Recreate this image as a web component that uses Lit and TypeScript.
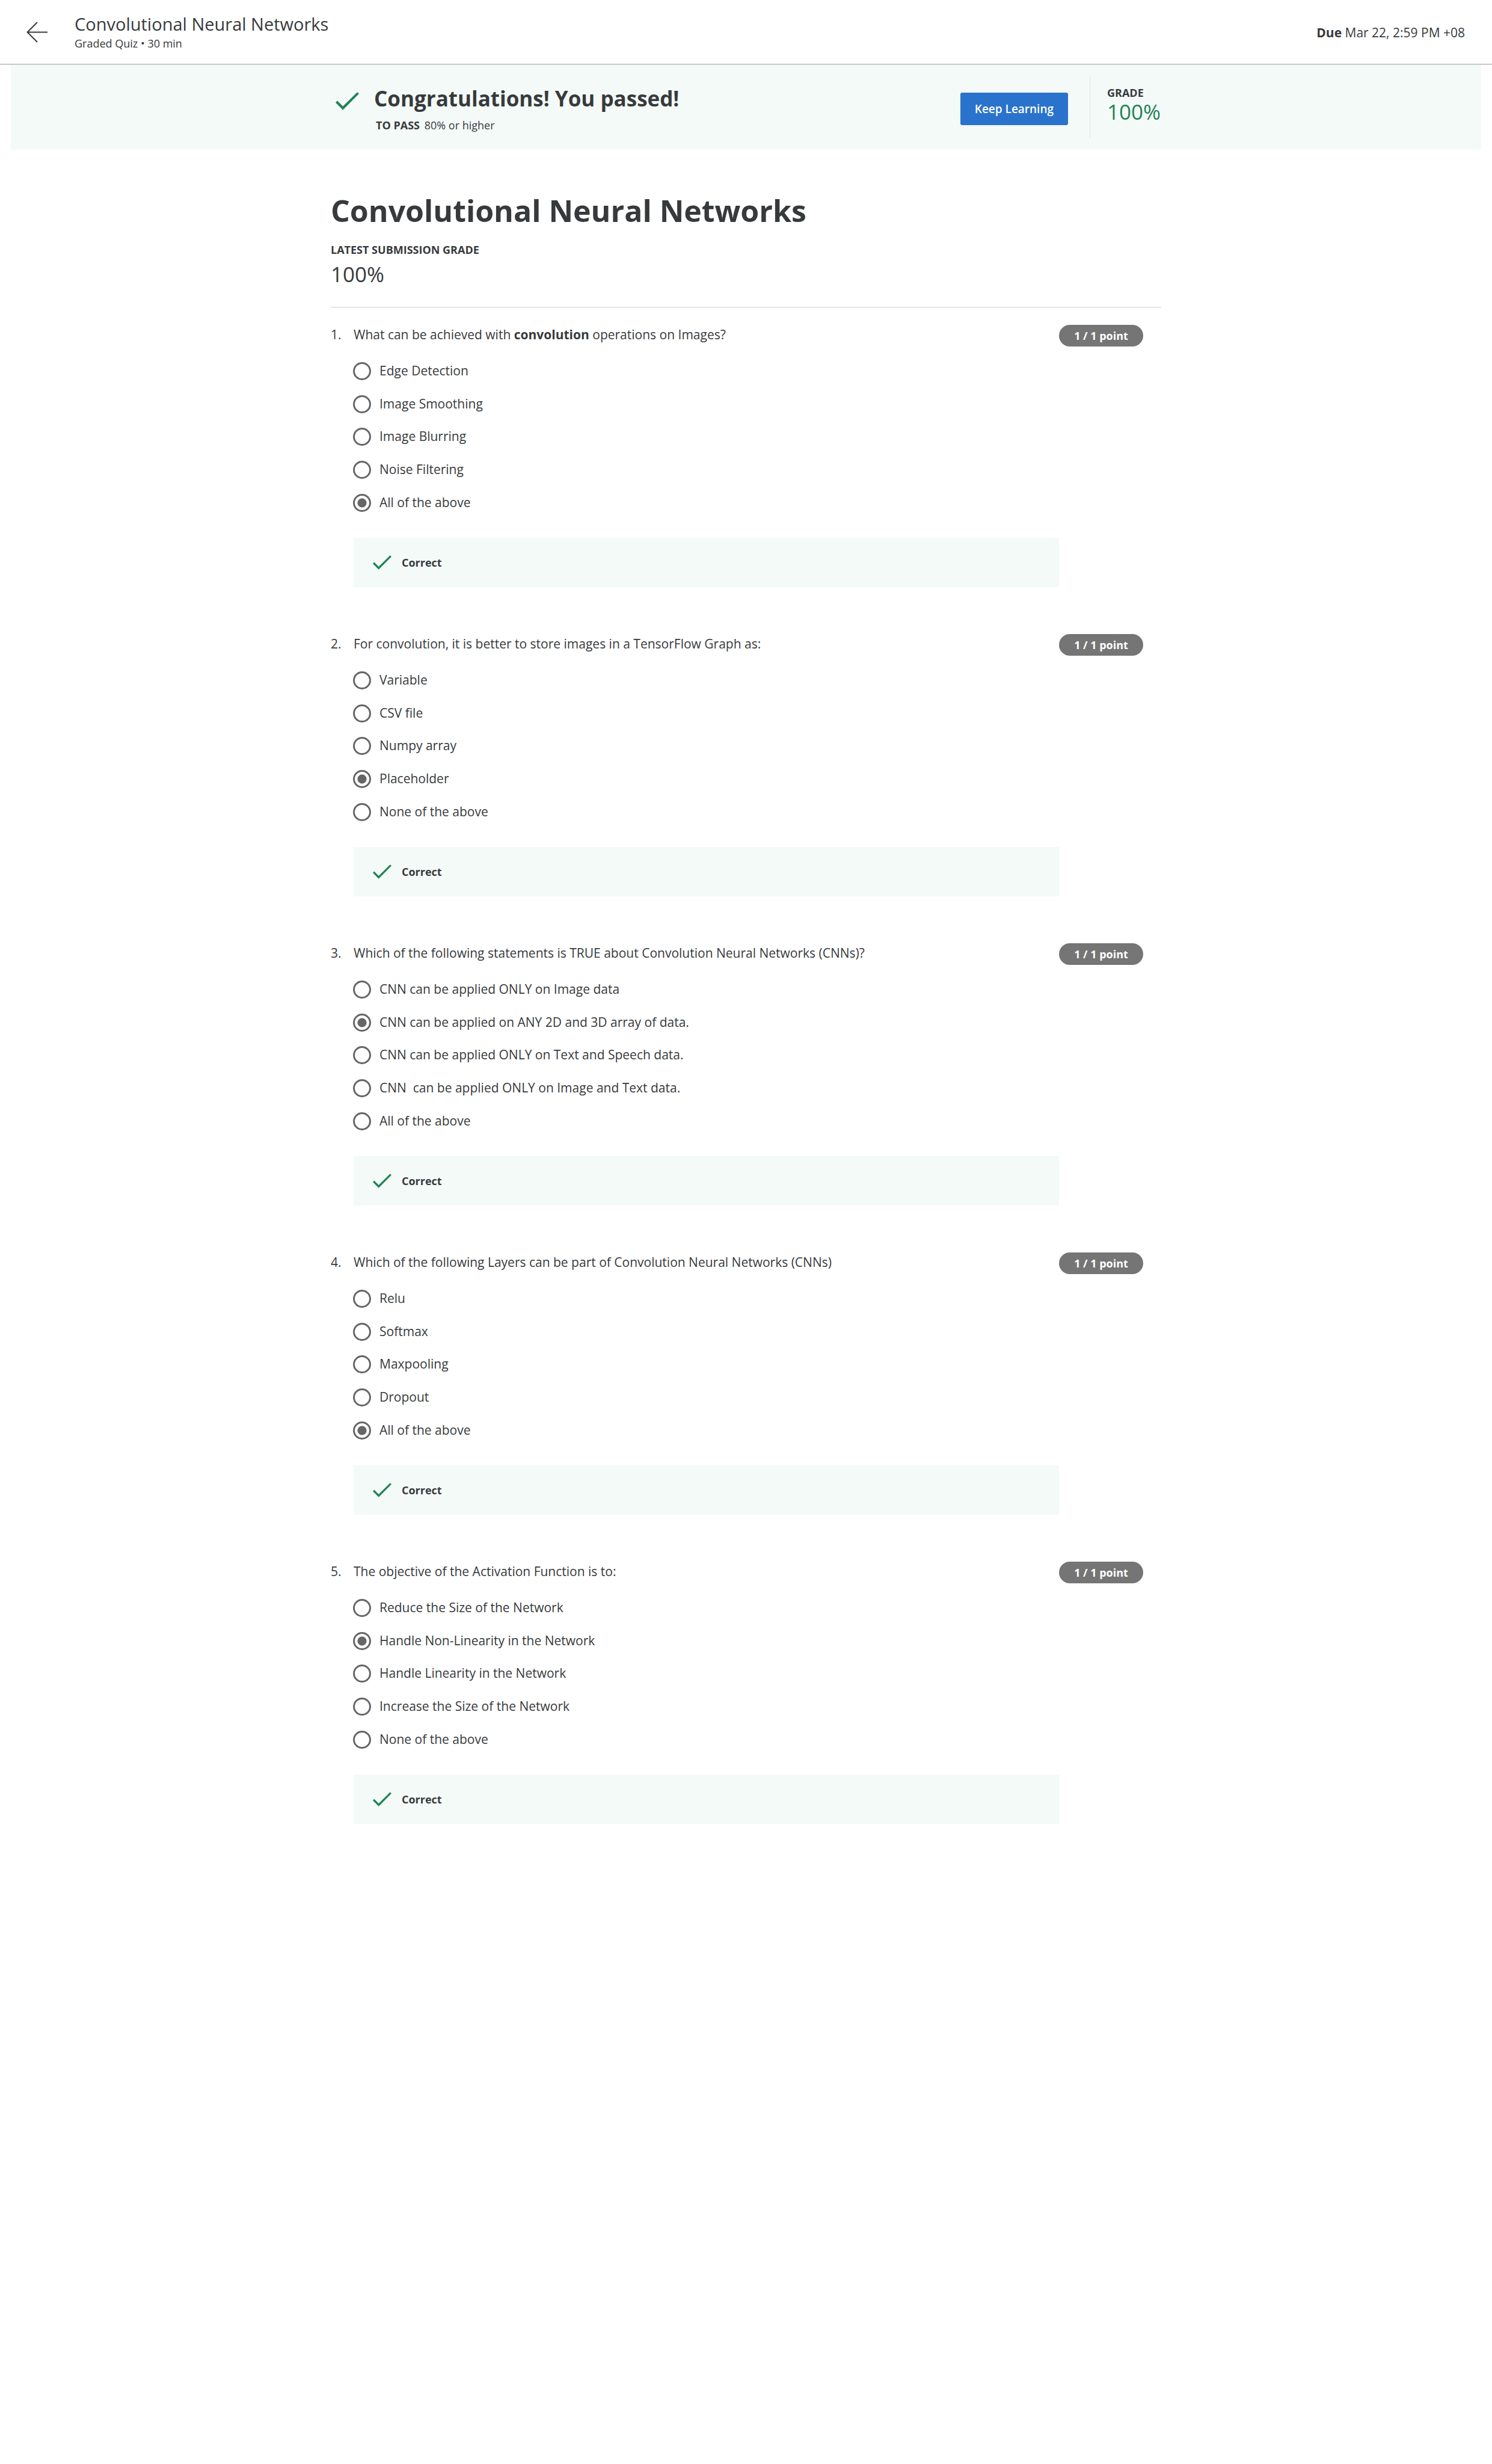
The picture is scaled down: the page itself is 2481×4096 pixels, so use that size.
import { LitElement, html, css, svg } from "lit";
import type { TemplateResult } from "lit";
import { customElement, property } from "lit/decorators.js";

interface Question {
  prompt: TemplateResult | string;
  options: string[];
  answer: number;
}

const QUESTIONS: Question[] = [
  {
    prompt: html`What can be achieved with <strong>convolution</strong> operations on Images?`,
    options: ["Edge Detection", "Image Smoothing", "Image Blurring", "Noise Filtering", "All of the above"],
    answer: 4,
  },
  {
    prompt: "For convolution, it is better to store images in a TensorFlow Graph as:",
    options: ["Variable", "CSV file", "Numpy array", "Placeholder", "None of the above"],
    answer: 3,
  },
  {
    prompt: "Which of the following statements is TRUE about Convolution Neural Networks (CNNs)?",
    options: [
      "CNN can be applied ONLY on Image data",
      "CNN can be applied on ANY 2D and 3D array of data.",
      "CNN can be applied ONLY on Text and Speech data.",
      "CNN\u00a0 can be applied ONLY on Image and Text data.",
      "All of the above",
    ],
    answer: 1,
  },
  {
    prompt: "Which of the following Layers can be part of Convolution Neural Networks (CNNs)",
    options: ["Relu", "Softmax", "Maxpooling", "Dropout", "All of the above"],
    answer: 4,
  },
  {
    prompt: "The objective of the Activation Function is to:",
    options: [
      "Reduce the Size of the Network",
      "Handle Non-Linearity in the Network",
      "Handle Linearity in the Network",
      "Increase the Size of the Network",
      "None of the above",
    ],
    answer: 1,
  },
];

const checkShape = svg`<polygon points="0,71 12,59 50,97 148,0 160,11 50,122" fill="currentColor" />`;

@customElement("quiz-question")
export class QuizQuestion extends LitElement {
  @property({ attribute: false }) question!: Question;
  @property({ type: Number }) number = 1;

  static styles = css`
    :host {
      display: grid;
      grid-template-columns: 38px minmax(0, 1fr) 140px;
      padding-right: 30px;
      color: #373a3c;
      font-size: 21px;
      line-height: 32px;
    }
    .body {
      min-width: 0;
    }
    .options {
      display: grid;
      grid-auto-rows: 1fr;
      align-items: center;
      min-height: 273px;
      margin: 18px 0 31px -1px;
      padding: 0;
      list-style: none;
    }
    .option {
      display: flex;
      align-items: center;
      gap: 14px;
      width: fit-content;
    }
    .text {
      padding-bottom: 2px;
    }
    input {
      appearance: none;
      flex: none;
      box-sizing: border-box;
      width: 30px;
      height: 30px;
      margin: 0;
      border: 3px solid #666;
      border-radius: 50%;
      background: #fff;
    }
    input:checked {
      background: radial-gradient(circle, #666 7px, #fff 8px);
    }
    .feedback {
      display: flex;
      align-items: center;
      gap: 17px;
      min-height: 82px;
      padding-left: 32px;
      background: #f4faf8;
      font-size: 18px;
      font-weight: 700;
    }
    .check {
      width: 31px;
      height: 24px;
      color: #1f8354;
    }
    .points {
      align-self: start;
      border-radius: 18px;
      background: #757575;
      color: #fff;
      font-size: 18px;
      font-weight: 700;
      line-height: 36px;
      text-align: center;
    }
  `;

  render() {
    const { prompt, options, answer } = this.question;
    return html`
      <div class="number">${this.number}.</div>
      <div class="body">
        <div class="prompt" id="prompt">${prompt}</div>
        <ul class="options" role="radiogroup" aria-labelledby="prompt">
          ${options.map(
            (text, i) => html`
              <li>
                <label class="option">
                  <input type="radio" name="answer" .checked=${i === answer} />
                  <span class="text">${text}</span>
                </label>
              </li>
            `,
          )}
        </ul>
        <div class="feedback">
          <svg class="check" viewBox="0 0 160 122" aria-hidden="true">${checkShape}</svg>
          <span>Correct</span>
        </div>
      </div>
      <div class="points">1 / 1 point</div>
    `;
  }
}

@customElement("app-root")
export class AppRoot extends LitElement {
  static styles = css`
    :host {
      display: block;
      min-height: 100vh;
      background: #fff;
      color: #373a3c;
      font-family: "Open Sans", "Noto Sans", sans-serif;
      font-size: 21px;
      line-height: 30px;
    }
    h1,
    h2,
    p {
      margin: 0;
    }
    .topbar {
      display: flex;
      align-items: center;
      box-sizing: border-box;
      min-height: 108px;
      padding: 0 45px 0 44px;
      border-bottom: 1px solid #d8d8d8;
      box-shadow: inset 0 -1px #bababa;
    }
    .back {
      display: flex;
      margin-right: 45px;
      color: #373a3c;
    }
    .arrow {
      width: 35px;
      height: 35px;
    }
    .course {
      flex: 1;
      padding-bottom: 3px;
    }
    .course-title {
      font-size: 29px;
      line-height: 40px;
    }
    .course-meta {
      font-size: 18px;
      line-height: 24px;
    }
    .banner {
      margin: 0 18px;
      background: #f4faf8;
    }
    .column {
      box-sizing: border-box;
      width: 1381px;
      max-width: 100%;
      margin: 0 auto;
    }
    .result {
      display: flex;
      align-items: center;
      min-height: 141px;
    }
    .message {
      display: grid;
      grid-template-columns: 39px auto;
      column-gap: 25px;
      flex: 1;
      padding: 2px 0 0 8px;
    }
    .check {
      width: 39px;
      height: 30px;
      margin-top: 13px;
      color: #1f8354;
    }
    .headline {
      font-size: 35px;
      line-height: 48px;
    }
    .pass {
      grid-column: 2;
      padding: 8px 0 0 3px;
      font-size: 18px;
      line-height: 24px;
    }
    .pass strong {
      margin-right: 3px;
    }
    .keep {
      min-height: 54px;
      margin-top: 5px;
      padding: 0 24px;
      border: 0;
      border-radius: 3px;
      background: #2a73cc;
      color: #fff;
      font: 600 19px/30px "Open Sans", sans-serif;
    }
    .grade {
      box-sizing: border-box;
      min-height: 101px;
      margin-left: 36px;
      padding: 14px 1px 0 28px;
      border-left: 1px solid #e1e5e4;
    }
    .label {
      font-size: 18px;
      font-weight: 700;
      line-height: 24px;
    }
    .score {
      font-size: 35px;
      line-height: 40px;
    }
    .passed {
      color: #1f8354;
    }
    .summary {
      padding: 66px 0 34px;
      border-bottom: 2px solid #e5e5e5;
    }
    .summary .label {
      margin-bottom: 9px;
    }
    .quiz-title {
      margin-bottom: 18px;
      font-size: 50px;
      line-height: 70px;
    }
    .questions {
      display: flex;
      flex-direction: column;
      gap: 78px;
      padding: 28px 0 80px;
    }
  `;

  render() {
    return html`
      <header class="topbar">
        <a class="back" href="#" aria-label="Back">
          <svg class="arrow" viewBox="0 0 35 35" fill="none" stroke="currentColor" stroke-width="2" aria-hidden="true">
            <path d="M35 17.5 H1 M18 1 L1.5 17.5 L18 34" />
          </svg>
        </a>
        <div class="course">
          <p class="course-title">Convolutional Neural Networks</p>
          <p class="course-meta">Graded Quiz • 30 min</p>
        </div>
        <p class="due"><strong>Due</strong> Mar 22, 2:59 PM +08</p>
      </header>
      <section class="banner">
        <div class="column result">
          <div class="message">
            <svg class="check" viewBox="0 0 160 122" aria-hidden="true">${checkShape}</svg>
            <h2 class="headline">Congratulations! You passed!</h2>
            <p class="pass"><strong>TO PASS</strong> 80% or higher</p>
          </div>
          <button class="keep" type="button">Keep Learning</button>
          <div class="grade">
            <p class="label">GRADE</p>
            <p class="score passed">100%</p>
          </div>
        </div>
      </section>
      <main class="column">
        <div class="summary">
          <h1 class="quiz-title">Convolutional Neural Networks</h1>
          <p class="label">LATEST SUBMISSION GRADE</p>
          <p class="score">100%</p>
        </div>
        <div class="questions">
          ${QUESTIONS.map((q, i) => html`<quiz-question .question=${q} .number=${i + 1}></quiz-question>`)}
        </div>
      </main>
    `;
  }
}
